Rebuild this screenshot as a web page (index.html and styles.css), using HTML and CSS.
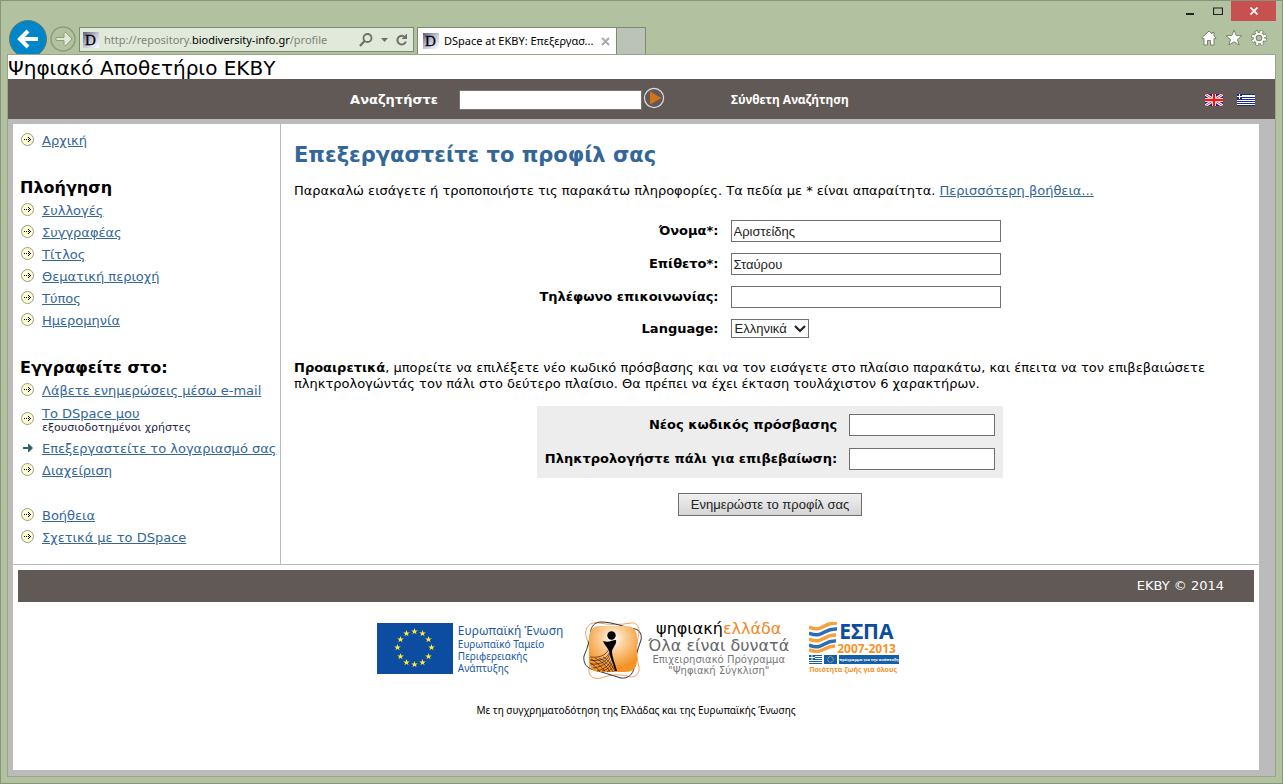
FILE: index.html
```html
<!DOCTYPE html>
<html lang="el">
<head>
<meta charset="utf-8">
<title>DSpace at EKBY: Επεξεργαστείτε το προφίλ σας</title>
<link rel="stylesheet" href="styles.css">
</head>
<body>
<svg class="defs" aria-hidden="true">
  <defs>
    <symbol id="bullet" viewBox="0 0 14 14">
      <circle cx="7.500" cy="6.500" r="6" fill="#ffffcc" stroke="#999" stroke-width="1"/>
      <path d="M4 6h1v1H4zM6 6h1v1H6zM8 6h1v1H8zM10 6h1v1h-1zM8 4h1v1H8zM9 5h1v1H9zM8 8h1v1H8zM9 7h1v1H9z" fill="#000" shape-rendering="crispEdges"/>
    </symbol>
    <symbol id="arrow" viewBox="0 0 14 14">
      <path d="M3 6h5V3h1l4 4-4 4H8V8H3z" fill="#2d6464"/>
    </symbol>
    <linearGradient id="fav" x1="0" y1="0" x2="1" y2="1">
      <stop offset="0" stop-color="#5a5f80"/><stop offset=".5" stop-color="#c2c4d4"/><stop offset="1" stop-color="#fff"/>
    </linearGradient>
    <symbol id="favicon" viewBox="0 0 16 16">
      <rect width="16" height="16" fill="url(#fav)"/>
      <text x="2" y="13" font-family="Liberation Serif, serif" font-size="15" stroke="#000" stroke-width=".3">D</text>
    </symbol>
    <symbol id="star" viewBox="-1 -1 2 2">
      <path d="M0-1L.23-.31H.95L.36.12.59.81 0 .38-.59.81-.36.12-.95-.31H-.23z"/>
    </symbol>
  </defs>
</svg>
<div class="window">
  <header class="chrome">
    <div class="nav-row">
      <button class="back" aria-label="Back">
        <svg width="38" height="34" viewBox="0 0 38 34"><circle cx="19" cy="19" r="18.500" fill="#0086c8" stroke="#5f7a68"/><path d="M29 19H12M19 11l-8 8 8 8" fill="none" stroke="#fff" stroke-width="4"/></svg>
      </button>
      <button class="forward" aria-label="Forward">
        <svg width="26" height="26" viewBox="0 0 26 26"><circle cx="13" cy="13" r="12" fill="none" stroke="#8d9c7c" stroke-width="1.500"/><path d="M6 11.500h8V7.500l1-1h1l6 6.500-6 6.500h-1l-1-1v-4H6z" fill="#dfe7d5" stroke="#8d9c7c"/></svg>
      </button>
      <div class="address">
        <svg width="16" height="16"><use href="#favicon"/></svg>
        <div class="url" role="textbox" aria-label="Address">http://repository.<span>biodiversity-info.gr</span>/profile</div>
        <button aria-label="Search"><svg width="14" height="14" viewBox="0 0 14 14"><circle cx="8.500" cy="5" r="4" fill="none" stroke="#6c7169" stroke-width="1.800"/><path d="M5.500 8L1 13" stroke="#6c7169" stroke-width="2.200"/></svg></button>
        <button aria-label="Search options"><svg width="7" height="14" viewBox="0 0 7 14"><path d="M0 5h7L3.500 9z" fill="#6c7169"/></svg></button>
        <button class="reload" aria-label="Refresh"><svg width="12" height="14" viewBox="0 0 12 14"><path d="M9.800 8.500A4.300 4.300 0 1 1 8 3.500" fill="none" stroke="#6c7169" stroke-width="2"/><path d="M5.500 6H11V.5z" fill="#6c7169"/></svg></button>
      </div>
      <div class="tab">
        <svg width="16" height="16"><use href="#favicon"/></svg>
        <span>DSpace at EKBY: Επεξεργασ...</span>
        <button aria-label="Close tab"><svg width="9" height="9" viewBox="0 0 9 9"><path d="M1 1l7 7M8 1L1 8" stroke="#aaa" stroke-width="2"/></svg></button>
      </div>
      <button class="new-tab" aria-label="New tab"></button>
    </div>
    <div class="chrome-right">
      <div class="win-buttons">
        <button aria-label="Minimize"><svg width="9" height="10"><rect y="7" width="8" height="2" fill="#222"/></svg></button>
        <button aria-label="Maximize"><svg width="10" height="8"><path d="M.5 1v6.500h9V1M0 1h10" fill="none" stroke="#222" stroke-width="1.200"/></svg></button>
        <button class="close" aria-label="Close"><svg width="8" height="8" viewBox="0 0 8 8"><path d="M.5.5l7 7M7.500.5l-7 7" stroke="#fff" stroke-width="1.700"/></svg></button>
      </div>
      <div class="tools">
        <button aria-label="Home"><svg width="16" height="16" viewBox="0 0 16 16"><path d="M8 1L.8 8l1.400 1L3 8.300V15h3.500v-4.500h3V15H13V8.300l.8.700 1.400-1L13 6V2.500h-2V4z" fill="#fff" stroke="#788568"/></svg></button>
        <button aria-label="Favorites"><svg width="18" height="17" viewBox="0 0 18 17"><path d="M9 1l2.200 5.500 5.800.3-4.500 3.700 1.600 5.500L9 12.800 3.900 16l1.600-5.500L1 6.800l5.800-.3z" fill="#fff" stroke="#788568"/></svg></button>
        <button aria-label="Tools"><svg width="16" height="16" viewBox="0 0 16 16"><g fill="none"><circle cx="8" cy="8" r="6" stroke="#788568" stroke-width="4" stroke-dasharray="3.200 1.512"/><circle cx="8" cy="8" r="4.300" stroke="#788568" stroke-width="4"/><circle cx="8" cy="8" r="6" stroke="#fff" stroke-width="2.600" stroke-dasharray="2 2.712" stroke-dashoffset="-.6"/><circle cx="8" cy="8" r="4.300" stroke="#fff" stroke-width="2"/></g></svg></button>
      </div>
    </div>
  </header>

  <div class="page">
    <div class="site-title">Ψηφιακό Αποθετήριο ΕΚΒΥ</div>
    <form class="search-bar">
      <label for="q">Αναζητήστε</label>
      <input id="q" type="text">
      <button type="submit" aria-label="Αναζήτηση"><svg width="22" height="22" viewBox="0 0 22 22"><circle cx="11" cy="11" r="9.600" fill="none" stroke="#ddd" stroke-width="1.200"/><path d="M7 4.500L18.500 11 7 17.500z" fill="#d2731b"/></svg></button>
      <a class="advanced" href="#">Σύνθετη Αναζήτηση</a>
      <div class="flags">
        <a href="#" aria-label="English"><svg width="18" height="12" viewBox="0 0 18 12"><path fill="#21218c" d="M0 0h18v12H0z"/><path d="M0 0l18 12M18 0L0 12" stroke="#fff" stroke-width="3"/><path d="M0 0l18 12M18 0L0 12" stroke="#e33" stroke-width="1"/><path d="M9 0v12M0 6h18" stroke="#fcc" stroke-width="4"/><path d="M9 0v12M0 6h18" stroke="#f11" stroke-width="2"/></svg></a>
        <a href="#" aria-label="Ελληνικά"><svg width="18" height="12" viewBox="0 0 18 12" shape-rendering="crispEdges"><path fill="#fff" d="M0 0h18v12H0z"/><path d="M0 .5h18M0 3.500h18M0 5.500h18M0 7.500h18M0 9.500h18M0 11.500h18" stroke="#1b2d7d"/><path fill="#1b2d7d" d="M0 0h5v5H0z"/><path d="M2.500 0v5M0 2.500h5" stroke="#fff"/></svg></a>
      </div>
    </form>

    <div class="panel">
      <div class="columns">
        <nav class="sidebar">
          <ul><li><svg><use href="#bullet"/></svg><a href="#">Αρχική</a></li></ul>
          <h2>Πλοήγηση</h2>
          <ul>
            <li><svg><use href="#bullet"/></svg><a href="#">Συλλογές</a></li>
            <li><svg><use href="#bullet"/></svg><a href="#">Συγγραφέας</a></li>
            <li><svg><use href="#bullet"/></svg><a href="#">Τίτλος</a></li>
            <li><svg><use href="#bullet"/></svg><a href="#">Θεματική περιοχή</a></li>
            <li><svg><use href="#bullet"/></svg><a href="#">Τύπος</a></li>
            <li><svg><use href="#bullet"/></svg><a href="#">Ημερομηνία</a></li>
          </ul>
          <h2>Εγγραφείτε στο:</h2>
          <ul>
            <li><svg><use href="#bullet"/></svg><a href="#">Λάβετε ενημερώσεις μέσω e-mail</a></li>
            <li class="tall"><svg><use href="#bullet"/></svg><div><a href="#">Το DSpace μου</a><small>εξουσιοδοτημένοι χρήστες</small></div></li>
            <li><svg><use href="#arrow"/></svg><a href="#">Επεξεργαστείτε το λογαριασμό σας</a></li>
            <li><svg><use href="#bullet"/></svg><a href="#">Διαχείριση</a></li>
          </ul>
          <ul>
            <li><svg><use href="#bullet"/></svg><a href="#">Βοήθεια</a></li>
            <li><svg><use href="#bullet"/></svg><a href="#">Σχετικά με το DSpace</a></li>
          </ul>
        </nav>

        <main class="content">
          <h1>Επεξεργαστείτε το προφίλ σας</h1>
          <p>Παρακαλώ εισάγετε ή τροποποιήστε τις παρακάτω πληροφορίες. Τα πεδία με * είναι απαραίτητα. <a href="#">Περισσότερη βοήθεια...</a></p>
          <form class="profile">
            <div class="fields">
              <label for="fn">Όνομα*:</label><input id="fn" type="text" value="Αριστείδης">
              <label for="ln">Επίθετο*:</label><input id="ln" type="text" value="Σταύρου">
              <label for="ph">Τηλέφωνο επικοινωνίας:</label><input id="ph" type="text">
              <label for="lang">Language:</label>
              <div class="select"><select id="lang"><option>Ελληνικά</option></select><svg width="12" height="8" viewBox="0 0 12 8"><path d="M1 1l5 5 5-5" fill="none" stroke="#222" stroke-width="2.200"/></svg></div>
            </div>
            <p><b>Προαιρετικά</b>, μπορείτε να επιλέξετε νέο κωδικό πρόσβασης και να τον εισάγετε στο πλαίσιο παρακάτω, και έπειτα να τον επιβεβαιώσετε πληκτρολογώντάς τον πάλι στο δεύτερο πλαίσιο. Θα πρέπει να έχει έκταση τουλάχιστον 6 χαρακτήρων.</p>
            <div class="fields password">
              <label for="p1">Νέος κωδικός πρόσβασης</label><input id="p1" type="password">
              <label for="p2">Πληκτρολογήστε πάλι για επιβεβαίωση:</label><input id="p2" type="password">
            </div>
            <button class="submit" type="submit">Ενημερώστε το προφίλ σας</button>
          </form>
        </main>
      </div>

      <footer>
        <div class="copyright">EKBY © 2014</div>
        <div class="logos">
          <div class="eu">
            <svg width="76" height="51" viewBox="0 0 76 51"><path fill="#0d4da1" d="M0 0h76v51H0z"/>
              <g fill="#ffee30">
                <use href="#star" x="34" y="5" width="7" height="7"/><use href="#star" x="42" y="7" width="7" height="7"/><use href="#star" x="48" y="13" width="7" height="7"/><use href="#star" x="51" y="21" width="7" height="7"/><use href="#star" x="48" y="30" width="7" height="7"/><use href="#star" x="42" y="36" width="7" height="7"/><use href="#star" x="34" y="38" width="7" height="7"/><use href="#star" x="26" y="36" width="7" height="7"/><use href="#star" x="20" y="30" width="7" height="7"/><use href="#star" x="17" y="21" width="7" height="7"/><use href="#star" x="20" y="13" width="7" height="7"/><use href="#star" x="26" y="7" width="7" height="7"/>
              </g></svg>
            <div class="eu-text"><strong>Ευρωπαϊκή Ένωση</strong>Ευρωπαϊκό Ταμείο<br>Περιφερειακής<br>Ανάπτυξης</div>
          </div>
          <div class="digital">
            <svg width="60" height="60" viewBox="0 0 60 60">
              <defs><radialGradient id="glow" cx=".5" cy=".27" r=".65"><stop offset="0" stop-color="#fff"/><stop offset=".35" stop-color="#fcd4a2"/><stop offset="1" stop-color="#f49328"/></radialGradient></defs>
              <path d="M16 3C27 5 37 5 48 3c5-1 9 4 8 10-3 12-3 22 0 34 1 6-3 10-8 10-10-3-19-3-30 1-7 2-13-2-12-9 3-12 1-22-3-33C1 8 7 1 16 3z" fill="none" stroke="#f3a061" stroke-width="1"/>
              <path d="M18 2c12 0 23 5 34 7 5 1 7 6 6 11-4 11-6 19-7 28-1 6-6 11-13 10-10-3-19-6-30-9-5-2-8-7-7-13 4-9 6-17 7-26 1-5 5-8 10-8z" fill="none" stroke="#333" stroke-width="1"/>
              <path d="M17 6h26c8 0 11 5 11 12v22c0 9-5 12-12 12H18C9 52 6 48 6 39V19C6 10 10 6 17 6z" fill="url(#glow)"/>
              <circle cx="28.500" cy="15.500" r="4.200"/>
              <path d="M20 21c6 2 9-1 13-1 1 4-3 7-4 11 0 6 3 12 5 20h-2c-1-7-5-13-6-20-1-3-4-5-6-10z"/>
              <path d="M26 28C24 36 15 38 7 37M27 31c-2 7-9 11-20 9M27 33c-2 8-9 12-19 11M28 36c-3 7-9 11-18 12M29 39c-3 7-8 10-15 12M30 42c-3 5-6 8-11 9M31 45c-2 4-4 5-7 7M12 38c6 3 11 7 15 14M16 38c6 3 11 7 14 14M20 37c6 3 9 9 12 14M8 39c5 3 10 7 14 12M7 43c4 2 7 5 10 9" fill="none" stroke="#211" stroke-width=".6"/>
            </svg>
            <div class="digital-text"><strong>ψηφιακή<em>ελλάδα</em></strong><b>Όλα είναι δυνατά</b><span>Επιχειρησιακό Πρόγραμμα</span><span>"Ψηφιακή Σύγκλιση"</span></div>
          </div>
          <div class="espa">
            <div class="espa-top">
              <svg width="30" height="32" viewBox="0 0 30 32" fill="none" stroke-width="3.500"><path d="M0 5c14 6 14-5 28-4" stroke="#f6a13b"/><path d="M0 11c14 6 14-5 28-4" stroke="#2b6db5"/><path d="M0 17c14 6 14-5 27-4" stroke="#f6a13b"/><path d="M0 23c14 6 14-5 27-4" stroke="#2b6db5"/><path d="M0 28c14 5 14-4 26-4" stroke="#f6a13b"/></svg>
              <div><strong>ΕΣΠΑ</strong><b>2007-2013</b></div>
            </div>
            <div class="espa-mid">
              <svg width="28" height="10" viewBox="0 0 28 10"><path fill="#fff" d="M0 0h28v10H0z"/><path d="M0 .5h13M0 2.500h13M0 4.500h13M0 6.500h13M0 8.500h13" stroke="#155ea8"/><path fill="#155ea8" d="M0 0h6v5H0zM15 0h13v9H15z"/><path d="M3 0v5M0 2.500h6" stroke="#fff"/><circle cx="21.500" cy="4.500" r="2.800" fill="none" stroke="#ffe03a" stroke-dasharray=".8 .666"/></svg>
              <span>πρόγραμμα για την ανάπτυξη</span>
            </div>
            <div class="espa-bottom">Ποιότητα ζωής για όλους</div>
          </div>
        </div>
        <div class="funding">Με τη συγχρηματοδότηση της Ελλάδας και της Ευρωπαϊκής Ένωσης</div>
      </footer>
    </div>
  </div>
</div>
</body>
</html>
```
FILE: styles.css
```css
* { box-sizing: border-box; }
body { margin: 0; font: 13px/16px Verdana, "DejaVu Sans", sans-serif; color: #000; }
svg { display: block; flex: none; }
button { padding: 0; border: 0; background: none; }
ul { list-style: none; margin: 0; padding: 0; }
.defs { position: absolute; width: 0; height: 0; }

.window { min-height: 100vh; display: flex; flex-direction: column; border: 1px solid #87957a; background: #b2c1a0; padding: 0 6px 6px; }

/* Browser chrome */
.chrome { display: flex; justify-content: space-between; height: 53px; font: 12px/16px "Segoe UI", "Noto Sans", sans-serif; }
.nav-row { display: flex; align-items: flex-end; padding-left: 2px; }
.forward { margin: 0 3px 2px; }
.address { display: flex; align-items: center; gap: 8px; width: 335px; height: 25px; margin: 0 3px 2px 0; padding: 0 5px 0 3px; border: 1px solid #7d8b6d; background: #e1e9da; }
.address button:first-of-type { margin-left: -4px; }
.url { flex: 1; color: #7e8479; white-space: nowrap; font-size: 11px; }
.address > svg, .tab > svg { margin-right: -3px; }
.url span { color: #000; }
.tab { display: flex; align-items: center; gap: 8px; width: 200px; height: 27px; padding: 0 6px 0 5px; border: 1px solid #7d8b6d; border-bottom: 0; background: #fff; white-space: nowrap; }
.tab span { flex: 1; font-size: 11px; }
.new-tab { width: 29px; height: 27px; border: 1px solid #7d8b6d; border-width: 1px 1px 0 0; background: #bbc2b8; }
.chrome-right { display: flex; flex-direction: column; align-items: flex-end; justify-content: space-between; }
.win-buttons { display: flex; }
.win-buttons button { display: flex; align-items: center; justify-content: center; width: 27px; height: 20px; }
.win-buttons .close { width: 45px; background: #c75050; }
.tools { display: flex; gap: 8px; align-items: center; padding: 0 9px 8px 0; }

/* Page */
.page { flex: 1; display: flex; flex-direction: column; border: 1px solid #98a687; background: #bbb; }
.site-title { height: 24px; background: #fff; font-size: 20px; line-height: 26px; }
.search-bar { display: flex; align-items: center; height: 40px; padding: 2px 20px 0 27%; background: #615955; color: #fff; font-weight: bold; }
.search-bar label { margin-right: 21px; }
.search-bar input { width: 183px; height: 20px; border: 1px solid #777; background: #fff; }
.search-bar button { margin: 0 66px 4px 1px; }
.advanced { color: #fff; text-decoration: none; font-family: "Noto Sans", sans-serif; font-size: 12px; }
.flags { display: flex; gap: 14px; margin-left: auto; }

.panel { flex: 1; margin: 5px 16px 6px 5px; background: #fff; }
.columns { display: flex; border-bottom: 1px solid #bbb; }
a { color: #369; }
.sidebar { flex: none; width: 268px; padding: 6px 0 15px 7px; border-right: 1px solid #bbb; white-space: nowrap; }
.sidebar ul + ul { margin-top: 23px; }
.sidebar h2 { margin: 24px 0 0; font-size: 16px; line-height: 24px; }
.sidebar li { display: flex; align-items: center; gap: 8px; height: 22px; }
.sidebar li.tall { height: 36px; }
.sidebar li svg { width: 14px; height: 14px; margin-bottom: 2px; }
.sidebar small { display: block; font-size: 11px; line-height: 12px; color: #224; }

.content { flex: 1; padding: 17px 13px 0; }
.content h1 { margin: 0; font-size: 21px; line-height: 28px; color: #369; }
.content p { margin: 14px 0 21px; }
.profile { display: flex; flex-direction: column; align-items: center; }
.profile p { margin: 22px 0 14px; align-self: stretch; }
.fields { display: grid; grid-template-columns: auto 270px; gap: 11px 12px; align-items: center; justify-items: end; font-weight: bold; }
.fields input { width: 100%; height: 22px; padding: 0 2px; border: 1px solid #707070; background: #fff; font: 13px "Liberation Sans", Arial, sans-serif; color: #222; }
.select { position: relative; justify-self: start; }
.select select { appearance: none; display: block; width: 78px; height: 19px; padding: 0 3px; border: 1px solid #707070; border-radius: 0; background: #fff; font: 13px "Liberation Sans", Arial, sans-serif; color: #222; }
.select svg { position: absolute; right: 3px; top: 6px; pointer-events: none; }
.password { grid-template-columns: auto 146px; gap: 12px; padding: 8px; background: #ededed; }
.submit { margin: 15px 0 20px; padding: 0 12px; height: 23px; border: 1px solid #707070; background: linear-gradient(#f0f0f0, #d5d5d5); font: 13px "Liberation Sans", Arial, sans-serif; color: #222; }

/* Footer */
.copyright { margin: 5px; padding: 8px 30px; background: #615955; color: #fff; text-align: right; }
.logos { display: flex; justify-content: center; gap: 20px; margin-top: 18px; font-family: "Noto Sans", sans-serif; }
.eu, .digital { display: flex; gap: 5px; color: #2058a5; white-space: nowrap; }
.eu { padding-top: 3px; font-size: 10px; line-height: 12px; }
.eu strong { display: block; font-size: 12px; font-weight: normal; line-height: 15px; }
.digital-text { display: flex; flex-direction: column; align-items: center; font: 10px/11px "DejaVu Sans", sans-serif; color: #777; }
.digital-text strong { font-size: 16px; line-height: 17px; font-weight: normal; color: #000; }
.digital-text em { font-style: normal; color: #f08a24; }
.digital-text b { font-size: 16px; line-height: 17px; font-weight: normal; color: #666; }
.espa { width: 86px; white-space: nowrap; padding-top: 2px; }
.espa-top { display: flex; height: 33px; color: #0d4da1; }
.espa-top strong { display: block; font-size: 21px; line-height: 18px; }
.espa-top b { display: block; font-size: 12px; line-height: 17px; color: #f49328; margin-left: -2px; }
.espa-mid { display: flex; height: 10px; gap: 2px; }
.espa-mid span { flex: 1; height: 9px; background: #155ea8; color: #fff; font-size: 4px; line-height: 9px; font-weight: bold; text-align: center; }
.espa-bottom { font-size: 7px; line-height: 10px; font-weight: bold; color: #f49328; }
.funding { margin: 22px 0 20px; font: 10px/16px "Noto Sans", sans-serif; text-align: center; }
```
